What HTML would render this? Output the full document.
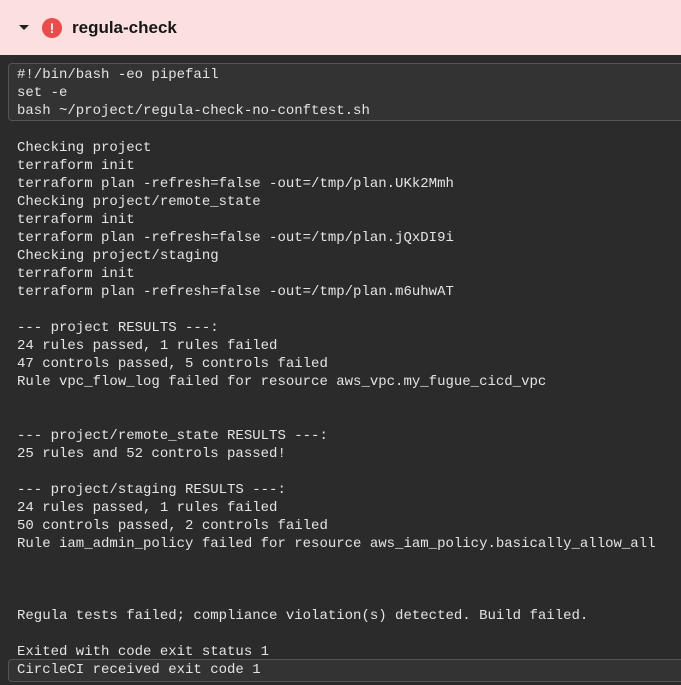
<!DOCTYPE html>
<html><head><meta charset="utf-8"><style>
html,body{margin:0;padding:0;width:681px;height:685px;overflow:hidden;background:#2b2b2b}
.hdr{height:55px;background:#fcdfdf;position:relative}
.arrow{position:absolute;left:19px;top:25px;width:0;height:0;border-left:5px solid transparent;border-right:5px solid transparent;border-top:5px solid #222}
.err{position:absolute;left:42px;top:18px;width:20px;height:20px;border-radius:50%;background:#ed4a4a;color:#fff;font:bold 14px/20px "Liberation Sans",sans-serif;text-align:center}
.title{position:absolute;left:72px;top:18px;font:bold 17px/20px "Liberation Sans",sans-serif;color:#161616}
pre{margin:0;font:14px/18px "Liberation Mono",monospace;color:#e4e4e4;white-space:pre}
.box{position:absolute;left:8px;right:-10px;background:#333;border:1px solid #555;border-radius:4px;padding:0 0 0 8px}
.out{position:absolute;left:17px;top:139px}
</style></head><body>
<div class="hdr"><div class="arrow"></div><div class="err">!</div><div class="title">regula-check</div></div>
<div class="box" style="top:63px;height:54px;padding-top:2px"><pre>#!/bin/bash -eo pipefail
set -e
bash ~/project/regula-check-no-conftest.sh</pre></div>
<pre class="out">Checking project
terraform init
terraform plan -refresh=false -out=/tmp/plan.UKk2Mmh
Checking project/remote_state
terraform init
terraform plan -refresh=false -out=/tmp/plan.jQxDI9i
Checking project/staging
terraform init
terraform plan -refresh=false -out=/tmp/plan.m6uhwAT

--- project RESULTS ---:
24 rules passed, 1 rules failed
47 controls passed, 5 controls failed
Rule vpc_flow_log failed for resource aws_vpc.my_fugue_cicd_vpc


--- project/remote_state RESULTS ---:
25 rules and 52 controls passed!

--- project/staging RESULTS ---:
24 rules passed, 1 rules failed
50 controls passed, 2 controls failed
Rule iam_admin_policy failed for resource aws_iam_policy.basically_allow_all



Regula tests failed; compliance violation(s) detected. Build failed.

Exited with code exit status 1</pre>
<div class="box" style="top:659px;height:20px;padding-top:1px"><pre>CircleCI received exit code 1</pre></div>
</body></html>
